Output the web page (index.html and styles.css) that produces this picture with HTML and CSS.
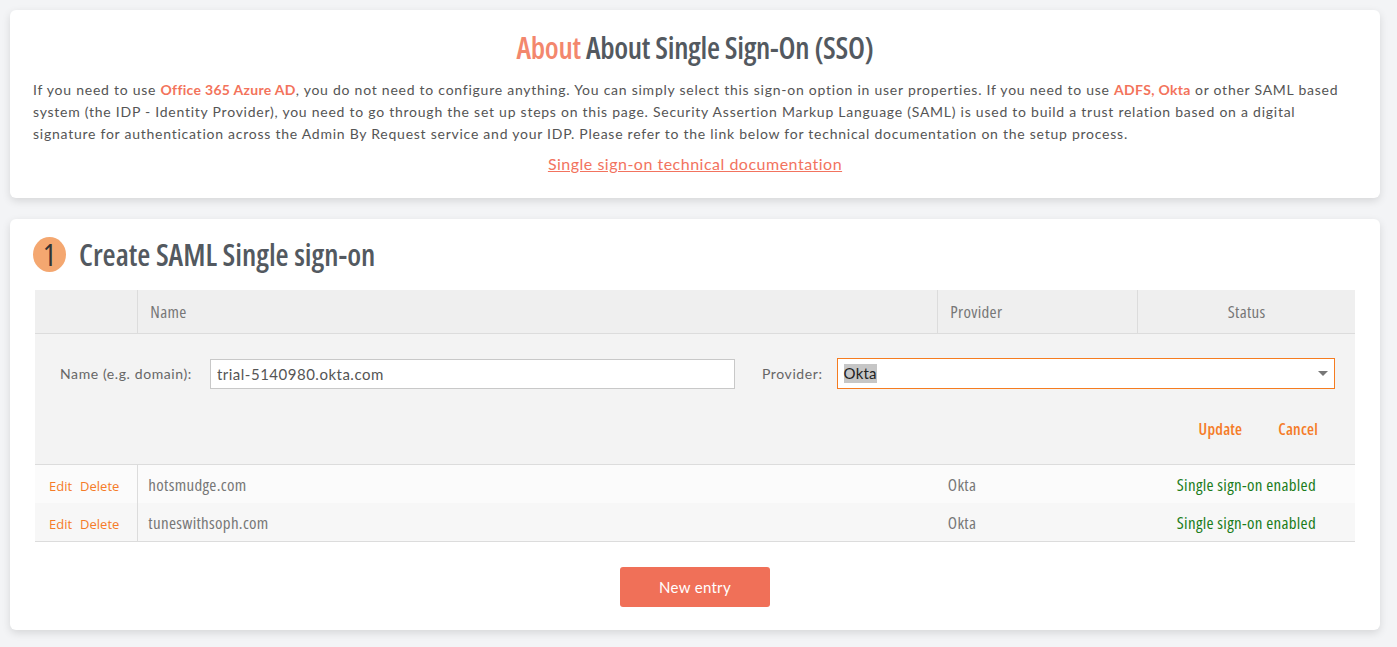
FILE: index.html
```html
<!DOCTYPE html>
<html lang="en">
<head>
<meta charset="UTF-8">
<title>Single Sign-On</title>
<link rel="stylesheet" href="styles.css">
</head>
<body>
<div class="page">

<div class="card about">
<h1 class="about-title"><span class="accent">About</span> About Single Sign-On (SSO)</h1>
<p class="about-text">If you need to use <b class="hl">Office 365 Azure AD</b>, you do not need to configure anything. You can simply select this sign-on option in user properties. If you need to use <b class="hl">ADFS, Okta</b> or other SAML based system (the IDP - Identity Provider), you need to go through the set up steps on this page. Security Assertion Markup Language (SAML) is used to build a trust relation based on a digital signature for authentication across the Admin By Request service and your IDP. Please refer to the link below for technical documentation on the setup process.</p>
<div class="doc-link"><a href="#">Single sign-on technical documentation</a></div>
</div>

<div class="card step">
<div class="step-head">
<span class="step-num">1</span>
<h2>Create SAML Single sign-on</h2>
</div>

<table class="grid">
<thead>
<tr>
<th class="c-act"></th>
<th class="c-name">Name</th>
<th class="c-prov">Provider</th>
<th class="c-status">Status</th>
</tr>
</thead>
<tbody>
<tr class="edit-row">
<td colspan="4">
<div class="edit-fields">
<label class="fld-label">Name (e.g. domain):</label>
<input class="fld-input" type="text" value="trial-5140980.okta.com">
<label class="fld-label prov-label">Provider:</label>
<div class="fld-select"><span class="sel-val">Okta</span><span class="caret"></span></div>
</div>
<div class="edit-actions">
<a href="#">Update</a>
<a href="#">Cancel</a>
</div>
</td>
</tr>
<tr class="row">
<td class="c-act"><a href="#">Edit</a><a href="#">Delete</a></td>
<td>hotsmudge.com</td>
<td>Okta</td>
<td class="ok">Single sign-on enabled</td>
</tr>
<tr class="row alt">
<td class="c-act"><a href="#">Edit</a><a href="#">Delete</a></td>
<td>tuneswithsoph.com</td>
<td>Okta</td>
<td class="ok">Single sign-on enabled</td>
</tr>
</tbody>
</table>

<div class="new-wrap"><button class="btn-new">New entry</button></div>
</div>

</div>
</body>
</html>
```

FILE: styles.css
```css
body {
margin: 0;
background-color: #f3f4f6;
font-family: "Lato", "Open Sans", sans-serif;
color: #555;
}
.page {
width: 1370px;
padding: 10px 0 17px 10px;
}
.card {
background-color: #fff;
border-radius: 6px;
box-shadow: 0 3px 8px rgba(0,0,0,0.12);
}
.about {
padding: 21px 23px 25px 23px;
margin-bottom: 21px;
}
.about-title {
margin: 0 0 14px 0;
text-align: center;
font-family: "Open Sans", sans-serif;
font-stretch: 75%;
font-weight: 600;
font-size: 30px;
color: #535960;
line-height: 34px;
letter-spacing: -0.3px;
}
.accent {
color: #f3876d;
}
.about-text {
margin: 0;
font-size: 14px;
line-height: 22px;
letter-spacing: 0.75px;
}
.hl {
color: #f3735b;
font-weight: 700;
letter-spacing: 0.3px;
}
.doc-link {
text-align: center;
margin-top: 9px;
}
.doc-link a {
color: #f2735e;
font-size: 16px;
letter-spacing: 0.5px;
}
.step {
padding: 15px 25px 23px 25px;
}
.step-head {
display: flex;
align-items: center;
margin-left: -2px;
margin-bottom: 15px;
}
.step-num {
width: 33px;
height: 35px;
border-radius: 50%;
background-color: #f4a770;
color: #333;
font-family: "Open Sans", sans-serif;
font-stretch: 75%;
font-size: 30px;
line-height: 35px;
text-align: center;
margin-right: 13px;
}
.step-head h2 {
margin: 0;
font-family: "Open Sans", sans-serif;
font-stretch: 75%;
font-weight: 600;
font-size: 30px;
color: #535960;
}
.grid {
width: 100%;
border-collapse: collapse;
font-family: "Open Sans", sans-serif;
font-stretch: 87.5%;
font-size: 17px;
letter-spacing: 0.3px;
color: #777;
}
.grid th {
background-color: #efefef;
font-weight: 500;
text-align: left;
height: 43px;
padding: 0 12px;
border-left: 1px solid #dcdcdc;
border-bottom: 1px solid #dcdcdc;
}
.grid th:first-child {
border-left: none;
}
.c-act { width: 77px; }
.c-name { width: 775px; }
.c-prov { width: 175px; }
.grid th.c-status {
text-align: center;
}
.edit-row td {
background-color: #f3f3f3;
padding: 24px 20px 24px 25px;
border-bottom: 1px solid #dcdcdc;
}
.edit-fields {
display: flex;
align-items: center;
font-family: "Lato", sans-serif;
font-size: 14px;
letter-spacing: 0.6px;
}
.fld-label {
color: #666;
margin-right: 14px;
}
.prov-label {
margin-left: 27px;
}
.fld-input {
margin-left: 4px;
width: 525px;
height: 30px;
box-sizing: border-box;
border: 1px solid #c8c8c8;
padding: 0 6px;
font-family: "Lato", sans-serif;
font-size: 15px;
letter-spacing: 0.5px;
color: #555;
}
.fld-select {
flex: 1;
height: 31px;
box-sizing: border-box;
border: 1px solid #f57c20;
background-color: #fff;
display: flex;
align-items: center;
padding: 0 6px;
}
.sel-val {
background-color: #c6c6c6;
color: #222;
font-size: 15px;
line-height: 19px;
letter-spacing: 0.2px;
}
.caret {
margin-left: auto;
border-left: 5px solid transparent;
border-right: 5px solid transparent;
border-top: 5px solid #777;
}
.edit-actions {
display: flex;
justify-content: flex-end;
gap: 36px;
margin-top: 29px;
padding-right: 17px;
}
.edit-actions a {
color: #f57c28;
font-weight: 600;
font-size: 16px;
letter-spacing: 0.2px;
text-decoration: none;
}
.row td {
height: 38px;
padding: 0 10px;
background-color: #fbfbfb;
}
.row.alt td {
background-color: #f7f7f7;
border-bottom: 1px solid #dcdcdc;
}
.row td.c-act {
border-right: 1px solid #dcdcdc;
padding-left: 14px;
}
.c-act a {
color: #f57c28;
font-stretch: 100%;
font-size: 13px;
font-weight: 500;
letter-spacing: 0;
text-decoration: none;
margin-right: 8px;
}
.ok {
color: #1b7d1b;
text-align: center;
}
.new-wrap {
text-align: center;
margin-top: 25px;
}
.btn-new {
width: 150px;
height: 40px;
border: none;
border-radius: 3px;
background-color: #f07058;
color: #fff;
font-family: "Lato", sans-serif;
font-size: 15px;
letter-spacing: 0.3px;
cursor: pointer;
}
```
